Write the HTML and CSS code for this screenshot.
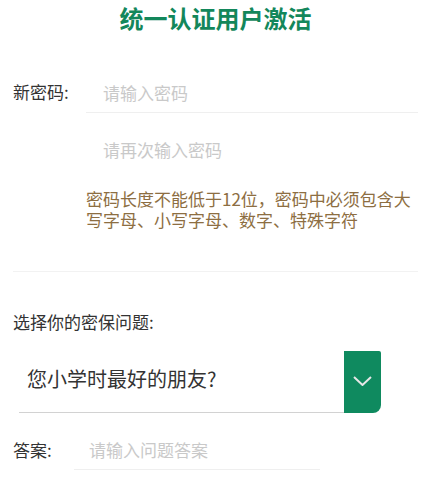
FILE: index.html
```html
<!DOCTYPE html>
<html lang="zh-CN">
<head>
<meta charset="utf-8">
<title>统一认证用户激活</title>
<link rel="stylesheet" href="styles.css">
</head>
<body>
<h1 class="title">统一认证用户激活</h1>
<div class="form">
  <div class="row row-first">
    <label class="label">新密码:</label>
    <input class="field field-line" type="password" placeholder="请输入密码">
  </div>
  <div class="row row-second">
    <span class="label"></span>
    <input class="field" type="password" placeholder="请再次输入密码">
  </div>
  <p class="hint">密码长度不能低于12位，密码中必须包含大写字母、小写字母、数字、特殊字符</p>
  <div class="divider"></div>
  <div class="q-label">选择你的密保问题:</div>
  <div class="select">
    <div class="select-text">您小学时最好的朋友?</div>
    <div class="select-btn">
      <svg width="19" height="10" viewBox="0 0 19 10"><polyline points="1,1 9.5,9 18,1" fill="none" stroke="#e6e6e6" stroke-width="2"/></svg>
    </div>
  </div>
  <div class="row row-answer">
    <label class="label label-answer">答案:</label>
    <input class="field field-answer" type="text" placeholder="请输入问题答案">
  </div>
</div>
</body>
</html>
```

FILE: styles.css
```css
* { box-sizing: border-box; }
html, body { margin: 0; padding: 0; background: #fff; }
body {
  padding: 0 12px 0 13px;
  font-family: "Noto Sans CJK SC", "Noto Sans", sans-serif;
  color: #333;
}
.title {
  margin: 0;
  font-size: 24px;
  line-height: 35px;
  font-weight: bold;
  color: #13875b;
  text-align: center;
}
.form { margin-top: 37px; }
.row { display: flex; align-items: flex-start; }
.label {
  width: 73px;
  flex: none;
  font-size: 17px;
  line-height: 40px;
  color: #333;
}
.field {
  flex: 1;
  height: 40px;
  border: none;
  outline: none;
  padding: 0 0 0 17px;
  margin: 0;
  font-family: "Noto Sans CJK SC", "Noto Sans", sans-serif;
  font-size: 17px;
  background: transparent;
  color: #333;
}
.field::placeholder { color: #c9c9c9; }
.field-line { height: 41px; border-bottom: 1px solid #efefef; }
.row-second { margin-top: 16px; }
.hint {
  margin: 19px 0 0 73px;
  font-size: 17px;
  line-height: 21px;
  color: #8d6e42;
}
.divider {
  margin-top: 41px;
  height: 1px;
  background: #f2f2f2;
}
.q-label {
  margin-top: 38px;
  font-size: 17px;
  line-height: 24px;
  color: #333;
}
.select {
  margin: 17px 37px 0 6px;
  height: 62px;
  display: flex;
}
.select-text {
  flex: 1;
  border-bottom: 1px solid #d2d2d2;
  padding: 0 0 5px 8px;
  font-size: 20px;
  line-height: 56px;
  color: #333;
}
.select-btn {
  width: 37px;
  flex: none;
  background: #0f8a5f;
  border-radius: 0 2px 8px 0;
  display: flex;
  align-items: center;
  justify-content: center;
  padding-bottom: 2px;
}
.row-answer { margin-top: 17px; }
.label-answer { width: 61px; line-height: 39px; }
.field-answer {
  flex: none;
  width: 246px;
  height: 40px;
  padding-left: 15px;
  border-bottom: 1px solid #efefef;
}
```
